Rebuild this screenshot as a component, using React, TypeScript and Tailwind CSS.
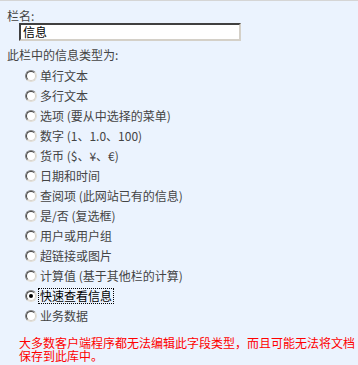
import React, { useState } from 'react'

const types = [
  '单行文本',
  '多行文本',
  '选项 (要从中选择的菜单)',
  '数字 (1、1.0、100)',
  '货币 ($、¥、€)',
  '日期和时间',
  '查阅项 (此网站已有的信息)',
  '是/否 (复选框)',
  '用户或用户组',
  '超链接或图片',
  '计算值 (基于其他栏的计算)',
  '快速查看信息',
  '业务数据',
]

function Radio({ checked }: { checked: boolean }) {
  return (
    <span className="relative inline-block w-[12px] h-[12px] rounded-full bg-white border border-t-[#808080] border-l-[#808080] border-r-[#e0ddd6] border-b-[#e0ddd6] shrink-0">
      <span className="absolute inset-0 rounded-full border border-t-[#404040] border-l-[#404040] border-r-[#d4d0c8] border-b-[#d4d0c8]" />
      {checked && (
        <span className="absolute left-[3px] top-[3px] w-[4px] h-[4px] rounded-full bg-black" />
      )}
    </span>
  )
}

export default function App() {
  const [selected, setSelected] = useState(11)

  return (
    <div
      className="w-[358px] h-[365px] bg-[#ebf3fe] border-t border-[#d5d5d5] text-[12px] text-[#444] overflow-hidden"
      style={{ fontFamily: '"Noto Sans CJK SC", "Liberation Sans", sans-serif' }}
    >
      <div className="pt-[8px] pl-[7px] leading-[14px]">栏名:</div>
      <div className="ml-[19px] w-[222px] h-[18px] bg-white border-t-2 border-l-2 border-t-[#404040] border-l-[#404040] border-r-2 border-b-2 border-r-[#d4d0c8] border-b-[#d4d0c8] text-black leading-[14px] pl-[2px]">
        信息
      </div>
      <div className="mt-[7px] pl-[7px] leading-[14px]">此栏中的信息类型为:</div>
      <div className="mt-[4px] flex flex-col">
        {types.map((t, i) => (
          <div
            key={t}
            className="h-[20px] flex items-center pl-[25px] gap-[2px] cursor-default"
            onClick={() => setSelected(i)}
          >
            <Radio checked={selected === i} />
            <span
              className={
                'leading-[14px] px-[1px] ' +
                (selected === i ? 'outline-1 outline-dotted outline-black text-black' : '')
              }
            >
              {t}
            </span>
          </div>
        ))}
      </div>
      <p className="mt-[10px] pl-[19px] pr-[2px] text-[#ff0000] leading-[13px]">
        大多数客户端程序都无法编辑此字段类型，而且可能无法将文档保存到此库中。
      </p>
    </div>
  )
}
